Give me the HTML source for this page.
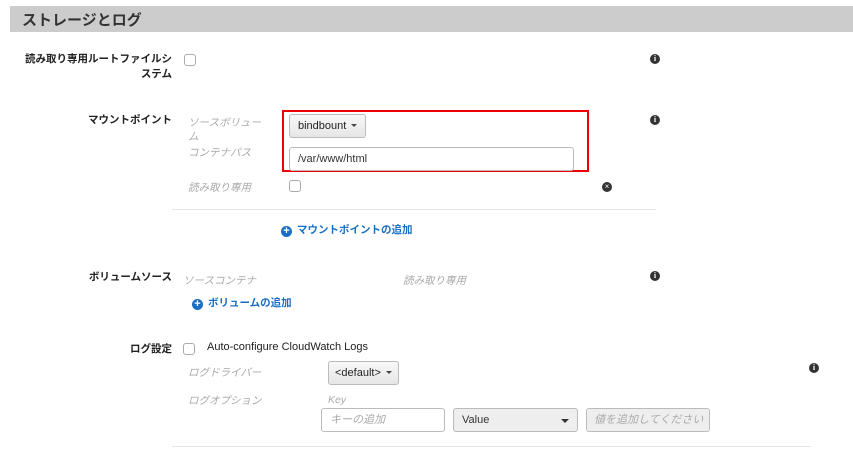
<!DOCTYPE html>
<html><head><meta charset="utf-8"><style>
*{margin:0;padding:0;box-sizing:border-box}
body{width:853px;height:450px;background:#fff;position:relative;overflow:hidden;font-family:"Liberation Sans","Noto Sans CJK JP",sans-serif;font-size:11px;color:#333}
.a{position:absolute;white-space:nowrap}
.lbl{font-weight:bold;text-align:right;color:#222;font-size:10.5px}
.ph{color:#aaa;font-style:italic;font-size:10.5px}
.cb{position:absolute;width:12px;height:12px;border:1px solid #aaa;border-radius:3px;background:#fff}
.btn{position:absolute;white-space:nowrap;border:1px solid #bbb;border-radius:3px;background:linear-gradient(#f8f8f8,#e6e6e6);font-size:11px;padding:0 8px;line-height:22px;color:#222}
.inp{position:absolute;white-space:nowrap;overflow:hidden;border:1px solid #bbb;border-radius:3px;background:#fff;padding:0 8px;font-size:11px}
.info{position:absolute;width:10px;height:10px;border-radius:50%;background:#333;color:#fff;font-size:8px;font-weight:bold;text-align:center;line-height:10px;font-family:"Liberation Serif",serif}
.plus{display:inline-block;width:11px;height:11px;border-radius:50%;background:#1a6fc4;color:#fff;font-size:11px;line-height:11px;text-align:center;font-weight:bold;margin-right:5px;vertical-align:-1px}
.link{color:#1a6fc4;font-weight:bold;font-size:10.5px}
.hr{position:absolute;height:1px;background:#e6e6e6}
.car{display:inline-block;border-left:3px solid transparent;border-right:3px solid transparent;border-top:3px solid #444;vertical-align:2px;margin-left:5px}
</style></head><body>
<div class="a" style="left:10px;top:6px;width:843px;height:26px;background:#cccccc"></div>
<div class="a" style="left:22px;top:9px;font-size:15px;font-weight:bold;color:#333">ストレージとログ</div>

<div class="a lbl" style="right:681px;top:52px;line-height:15px">読み取り専用ルートファイルシ<br>ステム</div>
<div class="cb" style="left:184px;top:54px"></div>
<div class="info" style="left:650px;top:54px">i</div>

<div class="a lbl" style="right:681px;top:112px">マウントポイント</div>
<div class="a ph" style="left:188px;top:116px;line-height:14px">ソースボリュー<br>ム</div>
<div class="a ph" style="left:188px;top:145px">コンテナパス</div>
<div class="a ph" style="left:188px;top:180px">読み取り専用</div>
<div class="a" style="left:282px;top:110px;width:307px;height:62px;border:2px solid #e00"></div>
<div class="btn" style="left:289px;top:114px">bindbount<span class="car"></span></div>
<div class="inp" style="left:289px;top:147px;width:285px;height:24px;line-height:22px">/var/www/html</div>
<div class="cb" style="left:289px;top:180px"></div>
<div class="info" style="left:650px;top:115px">i</div>
<div class="info" style="left:602px;top:182px;font-size:8px">×</div>
<div class="hr" style="left:172px;top:209px;width:484px"></div>
<div class="a link" style="left:281px;top:222px"><span class="plus">+</span>マウントポイントの追加</div>

<div class="a lbl" style="right:681px;top:269px">ボリュームソース</div>
<div class="a ph" style="left:183px;top:273px">ソースコンテナ</div>
<div class="a ph" style="left:403px;top:273px">読み取り専用</div>
<div class="info" style="left:650px;top:271px">i</div>
<div class="a link" style="left:192px;top:295px"><span class="plus">+</span>ボリュームの追加</div>

<div class="a lbl" style="right:681px;top:341px">ログ設定</div>
<div class="cb" style="left:183px;top:343px"></div>
<div class="a" style="left:207px;top:341px;color:#222">Auto-configure CloudWatch Logs</div>
<div class="a ph" style="left:188px;top:365px">ログドライバー</div>
<div class="btn" style="left:328px;top:361px;width:71px;height:24px;padding:0 6px">&lt;default&gt;<span class="car"></span></div>
<div class="info" style="left:809px;top:363px">i</div>
<div class="a ph" style="left:188px;top:393px">ログオプション</div>
<div class="a ph" style="left:328px;top:394px">Key</div>
<div class="inp ph" style="left:321px;top:408px;width:124px;height:24px;line-height:22px">キーの追加</div>
<div class="inp" style="left:453px;top:408px;width:125px;height:24px;line-height:22px;background:#eee">Value<span style="position:absolute;right:8px;top:10px;border-left:4px solid transparent;border-right:4px solid transparent;border-top:4px solid #333"></span></div>
<div class="inp ph" style="left:586px;top:408px;width:124px;height:24px;line-height:22px;background:#eee;padding:0 7px">値を追加してください</div>
<div class="hr" style="left:172px;top:446px;width:639px"></div>
</body></html>
